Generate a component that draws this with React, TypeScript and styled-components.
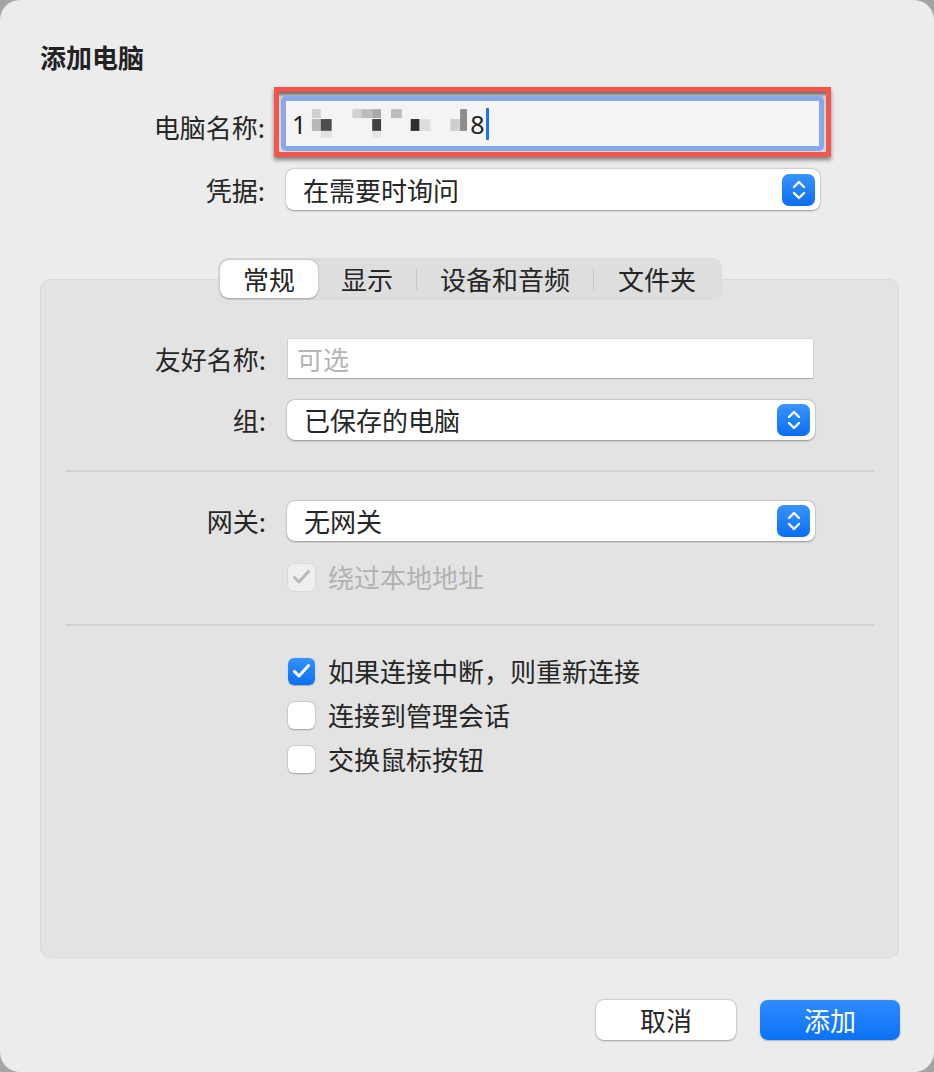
import React from "react";
import styled, { createGlobalStyle } from "styled-components";

const Global = createGlobalStyle`
  html, body { margin: 0; padding: 0; background: #a4a4a4; }
  body { font-family: "Noto Sans CJK SC", "Noto Sans", sans-serif; color: #262626; }
  * { box-sizing: border-box; }
`;

const Window = styled.div`
  width: 934px;
  height: 1072px;
  border-radius: 20px;
  background: #ececec;
  display: flex;
  flex-direction: column;
  padding: 41px 34px 32px 40px;
  overflow: hidden;
`;

const Title = styled.h1`
  margin: 0;
  font-size: 26px;
  line-height: 32px;
  font-weight: 700;
  color: #222;
`;

const FormGrid = styled.div<{ $fieldWidth: number; $rowGap: number; $top: number }>`
  display: grid;
  grid-template-columns: 225px ${(p) => p.$fieldWidth}px;
  column-gap: 21px;
  row-gap: ${(p) => p.$rowGap}px;
  align-items: center;
  margin-top: ${(p) => p.$top}px;
`;

const Label = styled.div<{ $shift?: number }>`
  text-align: right;
  font-size: 26px;
  line-height: 32px;
  color: #262626;
  margin-top: ${(p) => p.$shift || 0}px;
`;

const RedBox = styled.div`
  margin-left: -12px;
  width: 557px;
  height: 70px;
  border: 5px solid #f2574b;
  background: linear-gradient(#6e6e6e 0, #8a8a8a 2px, #cfcfcf 5px, #dadada 100%);
  box-shadow: 0 3px 4px rgba(0, 0, 0, 0.45);
  padding: 4px 2px 1px 2px;
`;

const FocusField = styled.div`
  height: 100%;
  border: 5px solid #86a9ee;
  border-radius: 5px;
  background: #f4f4f4;
  display: flex;
  align-items: center;
  padding-left: 6px;
  font-size: 25px;
  line-height: 30px;
  color: #222;
  font-family: "Noto Sans", "Noto Sans CJK SC", sans-serif;
`;

const Caret = styled.span`
  display: inline-block;
  width: 3px;
  height: 32px;
  background: #1b74f0;
  border-radius: 1px;
  margin-left: 1px;
`;

const Popup = styled.div<{ $h: number }>`
  height: ${(p) => p.$h}px;
  background: #ffffff;
  border-radius: 8px;
  box-shadow: 0 0.5px 2px rgba(0, 0, 0, 0.35), 0 0 0 0.5px rgba(0, 0, 0, 0.06);
  display: flex;
  align-items: center;
  justify-content: space-between;
  padding: 0 5px 0 17px;
  font-size: 26px;
  line-height: 32px;
  color: #262626;
`;

const Stepper = styled.div`
  width: 33px;
  height: 32px;
  border-radius: 7px;
  background: linear-gradient(#3994ff, #0a6ef2);
  display: flex;
  align-items: center;
  justify-content: center;
`;

const TabBar = styled.div`
  align-self: center;
  display: flex;
  align-items: center;
  height: 42px;
  padding: 2px;
  border-radius: 10px;
  background: #dedede;
  box-shadow: inset 0 0 0 0.5px rgba(0, 0, 0, 0.04);
  margin-top: 48px;
  margin-bottom: -21px;
  position: relative;
  z-index: 1;
`;

const Tab = styled.div<{ $active?: boolean; $w: number }>`
  width: ${(p) => p.$w}px;
  height: 38px;
  display: flex;
  align-items: center;
  justify-content: center;
  font-size: 26px;
  line-height: 32px;
  color: #262626;
  border-radius: 9px;
  background: ${(p) => (p.$active ? "#ffffff" : "transparent")};
  box-shadow: ${(p) => (p.$active ? "0 0.5px 2px rgba(0,0,0,0.3)" : "none")};
`;

const TabSep = styled.div`
  width: 1px;
  height: 22px;
  background: #c6c6c6;
`;

const Panel = styled.div`
  flex: 1;
  background: #e3e3e3;
  border: 1px solid #d9d9d9;
  border-radius: 10px;
  margin-right: 1px;
  padding-top: 59px;
  display: flex;
  flex-direction: column;
`;

const TextField = styled.div`
  height: 39px;
  margin-left: 1px;
  margin-right: 2px;
  background: #ffffff;
  box-shadow: 0 0 0 0.5px rgba(0, 0, 0, 0.12), 0 1px 1px rgba(0, 0, 0, 0.18);
  display: flex;
  align-items: center;
  padding-left: 9px;
  font-size: 26px;
  line-height: 32px;
  color: #b4b4b4;
`;

const Separator = styled.div<{ $top: number; $bottom: number }>`
  height: 2px;
  background: #d2d2d2;
  margin: ${(p) => p.$top}px 24px ${(p) => p.$bottom}px 25px;
`;

const CheckRow = styled.div<{ $disabled?: boolean }>`
  grid-column: 2;
  display: flex;
  align-items: center;
  gap: 13px;
  height: 32px;
  padding-left: 1px;
  font-size: 26px;
  line-height: 32px;
  color: ${(p) => (p.$disabled ? "#b2b2b2" : "#262626")};
`;

const Box = styled.div<{ $state: "on" | "off" | "disabled" }>`
  width: 27px;
  height: 27px;
  border-radius: 6px;
  display: flex;
  align-items: center;
  justify-content: center;
  background: ${(p) =>
    p.$state === "on" ? "linear-gradient(#3592ff, #0b6ff2)" : p.$state === "disabled" ? "#efefef" : "#ffffff"};
  box-shadow: ${(p) =>
    p.$state === "on"
      ? "0 0.5px 1px rgba(0,0,0,0.25)"
      : p.$state === "disabled"
      ? "0 0 0 0.5px rgba(0,0,0,0.08)"
      : "0 0 0 0.5px rgba(0,0,0,0.12), 0 0.5px 1.5px rgba(0,0,0,0.25)"};
`;

const CheckList = styled.div`
  display: grid;
  grid-template-columns: 225px 528px;
  column-gap: 21px;
  row-gap: 12px;
`;

const Footer = styled.div`
  display: flex;
  justify-content: flex-end;
  gap: 24px;
  margin-top: 42px;
`;

const Button = styled.button<{ $primary?: boolean }>`
  width: 140px;
  height: 40px;
  border: none;
  border-radius: 8px;
  font-family: inherit;
  font-size: 26px;
  line-height: 32px;
  color: ${(p) => (p.$primary ? "#ffffff" : "#262626")};
  background: ${(p) => (p.$primary ? "linear-gradient(#2f8cff, #0a72f5)" : "#ffffff")};
  box-shadow: ${(p) =>
    p.$primary ? "0 0.5px 1.5px rgba(0,0,0,0.25)" : "0 0 0 0.5px rgba(0,0,0,0.08), 0 0.5px 2px rgba(0,0,0,0.3)"};
  padding: 0;
`;

const Chevrons = () => (
  <svg width="16" height="22" viewBox="0 0 16 22" fill="none" stroke="#fff" strokeWidth="2.4" strokeLinecap="round" strokeLinejoin="round">
    <path d="M3 8 L8 3 L13 8" />
    <path d="M3 14 L8 19 L13 14" />
  </svg>
);

const Check = ({ color }: { color: string }) => (
  <svg width="19" height="16" viewBox="0 0 19 16" fill="none" stroke={color} strokeWidth="3" strokeLinecap="round" strokeLinejoin="round">
    <path d="M2.5 8.5 L7 13 L16.5 2.5" />
  </svg>
);

const blocks: [number, number, number, number, string][] = [
  [6, 0, 9, 9, "#cfcfcf"],
  [6, 10, 9, 12, "#b8b8b8"],
  [15, 10, 11, 12, "#4e4e4e"],
  [15, 22, 11, 7, "#e2e2e2"],
  [47, 0, 9, 9, "#d2d2d2"],
  [56, 0, 11, 9, "#bdbdbd"],
  [67, 0, 9, 9, "#a9a9a9"],
  [67, 10, 9, 12, "#414141"],
  [67, 22, 9, 7, "#e6e6e6"],
  [86, 0, 11, 9, "#bdbdbd"],
  [106, 10, 9, 12, "#2f2f2f"],
  [115, 10, 11, 12, "#dedede"],
  [146, 10, 10, 12, "#cfcfcf"],
  [156, 0, 7, 22, "#8c8c8c"],
];

const Mosaic = () => (
  <svg width="164" height="30" viewBox="0 0 166 30">
    {blocks.map(([x, y, w, h, c], i) => (
      <rect key={i} x={x} y={y} width={w} height={h} fill={c} />
    ))}
  </svg>
);

export default function App() {
  return (
    <>
      <Global />
      <Window>
        <Title>添加电脑</Title>
        <FormGrid $fieldWidth={534} $rowGap={12} $top={14}>
          <Label $shift={9}>电脑名称:</Label>
          <RedBox>
            <FocusField>
              <span>1</span>
              <Mosaic />
              <span>8</span>
              <Caret />
            </FocusField>
          </RedBox>
          <Label>凭据:</Label>
          <Popup $h={41}>
            <span>在需要时询问</span>
            <Stepper>
              <Chevrons />
            </Stepper>
          </Popup>
        </FormGrid>

        <TabBar>
          <Tab $active $w={98}>常规</Tab>
          <Tab $w={98}>显示</Tab>
          <TabSep />
          <Tab $w={176}>设备和音频</Tab>
          <TabSep />
          <Tab $w={126}>文件夹</Tab>
        </TabBar>

        <Panel>
          <FormGrid $fieldWidth={528} $rowGap={22} $top={0}>
            <Label>友好名称:</Label>
            <TextField>可选</TextField>
            <Label>组:</Label>
            <Popup $h={40}>
              <span>已保存的电脑</span>
              <Stepper>
                <Chevrons />
              </Stepper>
            </Popup>
          </FormGrid>
          <Separator $top={30} $bottom={29} />
          <FormGrid $fieldWidth={528} $rowGap={20} $top={0}>
            <Label>网关:</Label>
            <Popup $h={40}>
              <span>无网关</span>
              <Stepper>
                <Chevrons />
              </Stepper>
            </Popup>
            <CheckRow $disabled>
              <Box $state="disabled">
                <Check color="#b9b9b9" />
              </Box>
              绕过本地地址
            </CheckRow>
          </FormGrid>
          <Separator $top={31} $bottom={29} />
          <CheckList>
            <CheckRow>
              <Box $state="on">
                <Check color="#ffffff" />
              </Box>
              如果连接中断，则重新连接
            </CheckRow>
            <CheckRow>
              <Box $state="off" />
              连接到管理会话
            </CheckRow>
            <CheckRow>
              <Box $state="off" />
              交换鼠标按钮
            </CheckRow>
          </CheckList>
        </Panel>

        <Footer>
          <Button>取消</Button>
          <Button $primary>添加</Button>
        </Footer>
      </Window>
    </>
  );
}
